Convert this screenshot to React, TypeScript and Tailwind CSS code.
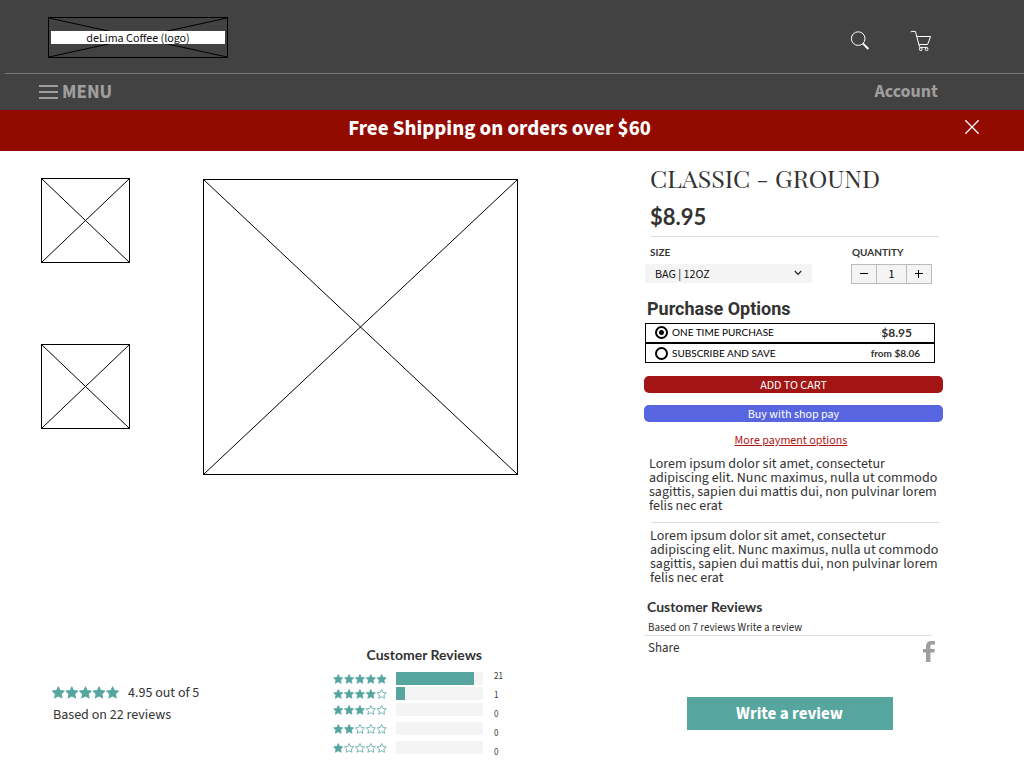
import { useState } from "react";

const SOURCE = "font-['Source_Sans_Pro','Source_Sans_3','Noto_Sans_CJK_SC',sans-serif]";
const LATO = "font-['Lato',sans-serif]";

const STAR = "M10 1 L12.8 7 L19.2 7.7 L14.5 12.1 L15.8 18.6 L10 15.4 L4.2 18.6 L5.5 12.1 L0.8 7.7 L7.2 7 Z";

function Stars({ filled, className }: { filled: number; className: string }) {
  return (
    <svg
      viewBox="0 0 107 20"
      className={`text-[#56a69f] ${className}`}
      role="img"
      aria-label={`${filled} out of 5 stars`}
    >
      {[0, 1, 2, 3, 4].map((i) => (
        <path
          key={i}
          d={STAR}
          transform={`translate(${i * 21.7} 0)`}
          fill={i < filled ? "currentColor" : "none"}
          stroke="currentColor"
          strokeWidth="1.6"
          strokeLinejoin="round"
        />
      ))}
    </svg>
  );
}

function Placeholder({ className }: { className: string }) {
  return (
    <svg className={`block border border-black ${className}`} viewBox="0 0 100 100" preserveAspectRatio="none" aria-hidden="true">
      <path d="M0 0L100 100M100 0L0 100" stroke="#000" strokeWidth="1" vectorEffect="non-scaling-stroke" />
    </svg>
  );
}

const ratings = [
  { stars: 5, count: 21, share: 90 },
  { stars: 4, count: 1, share: 10 },
  { stars: 3, count: 0, share: 0 },
  { stars: 2, count: 0, share: 0 },
  { stars: 1, count: 0, share: 0 },
];

const ROWS = "grid grid-rows-[15px_15px_17px_21px_17px] items-center";

function Header() {
  return (
    <header className="bg-[#424242]">
      <div className="flex h-[73px] items-start justify-between pt-[17px] pr-[92px] pl-12">
        <a href="#home" className="relative flex h-[41px] w-[180px] items-center justify-center px-[3px]">
          <Placeholder className="absolute inset-0 h-full w-full" />
          <span className="relative flex h-[13px] w-full justify-center bg-white text-[12px] leading-[15px] text-[#111]">
            deLima Coffee (logo)
          </span>
        </a>
        <div className="flex gap-[38px] pt-[13px]">
          <button type="button" aria-label="Search">
            <svg viewBox="0 0 22 22" className="size-[22px]" fill="none" stroke="#fff">
              <circle cx="8.2" cy="8.6" r="6.8" strokeWidth="1" />
              <path d="M13 13.6L18.4 19" strokeWidth="2" />
            </svg>
          </button>
          <button type="button" aria-label="Cart">
            <svg viewBox="0 0 22 22" className="size-[22px]" fill="none" stroke="#fff" strokeWidth="1">
              <path d="M1.2 2.2V1.4H5.4L9.6 17.4H17.6" />
              <path d="M7 6.5H20.6L17.6 14.5H9" />
              <circle cx="10.8" cy="19.2" r="1.4" />
              <circle cx="16.6" cy="19.2" r="1.4" />
            </svg>
          </button>
        </div>
      </div>
      <nav className="ml-[5px] flex h-[37px] items-center justify-between border-t border-[#777] pr-[86px] pb-px pl-[34px] font-bold text-[#9e9e9e]">
        <button type="button" className="flex items-center gap-1 text-[19px]">
          <svg viewBox="0 0 19 14" className="h-[14px] w-[19px]" fill="currentColor" aria-hidden="true">
            <path d="M0 0H19V2H0ZM0 6H19V8H0ZM0 12H19V14H0Z" />
          </svg>
          <span className="pt-[2px] leading-[22px]">MENU</span>
        </button>
        <a href="#account" className="text-[18px] leading-6">
          Account
        </a>
      </nav>
    </header>
  );
}

function Banner({ onClose }: { onClose: () => void }) {
  return (
    <div className="flex h-[41px] items-start bg-[#930a00] pt-[6px] pr-11 pl-[19px] text-white">
      <p className="flex-1 pl-[16px] text-center text-[21px] leading-6 font-bold">Free Shipping on orders over $60</p>
      <button type="button" aria-label="Dismiss" onClick={onClose} className="pt-[3px]">
        <svg viewBox="0 0 16 16" className="size-4" stroke="currentColor" strokeWidth="1.3">
          <path d="M1.3 1.3L14.7 14.7M14.7 1.3L1.3 14.7" />
        </svg>
      </button>
    </div>
  );
}

function Reviews() {
  return (
    <section className="mt-[170px] flex pl-[11px]">
      <div className="w-[281px] pt-[36px] text-[14px] leading-5 text-[#333]">
        <div className="flex items-center gap-[9px]">
          <Stars filled={5} className="h-[13px] w-[67px]" />
          <span className="pt-[2px]">4.95 out of 5</span>
        </div>
        <p className="pt-[2px] pl-px">Based on 22 reviews</p>
      </div>
      <div>
        <h2 className={`pr-[21px] text-right text-[14px] leading-5 font-bold text-[#333] ${LATO}`}>Customer Reviews</h2>
        <div className="flex items-start pt-[6px]">
          <div className={ROWS}>
            {ratings.map((r) => (
              <Stars key={r.stars} filled={r.stars} className="h-[10px] w-[54px]" />
            ))}
          </div>
          <div className={`ml-[9px] ${ROWS}`}>
            {ratings.map((r) => (
              <div key={r.stars} className="h-[13px] w-[87px] bg-[#f4f4f4]">
                <div className="h-full bg-[#56a69f]" style={{ width: `${r.share}%` }} />
              </div>
            ))}
          </div>
          <div className="-mt-1 ml-[11px] text-[9px] leading-[19px] text-[#333]">
            {ratings.map((r) => (
              <div key={r.stars}>{r.count}</div>
            ))}
          </div>
        </div>
      </div>
    </section>
  );
}

const RADIO =
  "size-[13px] shrink-0 appearance-none rounded-full border-2 border-black bg-white checked:bg-[radial-gradient(circle,#000_2px,#fff_3px)]";
const LOREM =
  "Lorem ipsum dolor sit amet, consectetur adipiscing elit. Nunc maximus, nulla ut commodo sagittis, sapien dui mattis dui, non pulvinar lorem felis nec erat";

function Product() {
  const [qty, setQty] = useState(1);
  return (
    <section className="w-[299px] shrink-0 text-[#333]">
      <div className="px-[6px]">
        <h1 className="pt-[11px] font-['Playfair_Display','Liberation_Serif',serif] text-[25px] leading-8">CLASSIC - GROUND</h1>
        <p className={`pt-[9px] text-[22px] leading-7 font-bold ${LATO}`}>$8.95</p>
      </div>
      <hr className="mt-[5px] mr-1 ml-[7px] border-[#ddd]" />
      <div className={`mt-[8px] flex justify-between pr-[11px] pl-px ${LATO}`}>
        <div>
          <label htmlFor="size" className="block pl-[5px] text-[10px] leading-[14px] font-bold">
            SIZE
          </label>
          <div className="relative mt-[5px]">
            <select
              id="size"
              className={`block h-[19px] w-[167px] appearance-none bg-[#f4f4f4] pt-[2px] pl-[10px] text-[12px] leading-[17px] text-[#111] ${SOURCE}`}
            >
              <option>BAG | 12OZ</option>
            </select>
            <svg viewBox="0 0 8 6" className="pointer-events-none absolute top-[6px] right-[10px] h-[6px] w-2" fill="none" stroke="#222" strokeWidth="1.2">
              <path d="M0.8 1L4 4.4L7.2 1" />
            </svg>
          </div>
        </div>
        <div>
          <label htmlFor="qty" className="block pl-px text-[10px] leading-[14px] font-bold">
            QUANTITY
          </label>
          <div className="mt-[5px] flex h-5 w-[81px] divide-x divide-[#bbb] border border-[#bbb] bg-[#f4f4f4] text-black">
            <button type="button" aria-label="Decrease" className="flex flex-1 items-center justify-center" onClick={() => setQty(Math.max(1, qty - 1))}>
              <svg viewBox="0 0 8 8" className="size-2" stroke="currentColor"><path d="M0 3.5H8" /></svg>
            </button>
            <input
              id="qty"
              className={`w-[30px] pt-[2px] text-center text-[12px] ${SOURCE}`}
              value={qty}
              onChange={(e) => setQty(Number(e.target.value) || 1)}
            />
            <button type="button" aria-label="Increase" className="flex flex-1 items-center justify-center" onClick={() => setQty(qty + 1)}>
              <svg viewBox="0 0 8 8" className="size-2" stroke="currentColor"><path d="M0 3.5H8M3.5 0V8" /></svg>
            </button>
          </div>
        </div>
      </div>
      <fieldset className="pr-2 pl-px">
        <legend className="pt-[14px] pl-[2px] font-['Roboto',sans-serif] text-[18px] leading-[22px] font-bold">Purchase Options</legend>
        <div className={`mt-[3px] text-[10px] text-black ${LATO}`}>
          <label className="flex h-5 items-center gap-1 border border-black pr-[22px] pb-px pl-[9px]">
            <input type="radio" name="plan" defaultChecked className={RADIO} />
            ONE TIME PURCHASE
            <span className="ml-auto text-[12px] leading-4 font-bold text-[#333]">$8.95</span>
          </label>
          <label className="flex h-5 items-center gap-1 border border-black pr-[14px] pl-[9px]">
            <input type="radio" name="plan" className={RADIO} />
            SUBSCRIBE AND SAVE
            <span className="ml-auto font-bold text-[#333]">from $8.06</span>
          </label>
        </div>
      </fieldset>
      <div className="mt-[13px] flex flex-col gap-3 text-center text-[12px] leading-[15px] text-white">
        <button type="button" className="h-[17px] rounded-[5px] bg-[#a31515] pt-[2px]">ADD TO CART</button>
        <button type="button" className="h-[17px] rounded-[5px] bg-[#5865e0] pt-[2px]">Buy with shop pay</button>
      </div>
      <p className="pt-[10px] pr-[5px] text-center text-[12px] leading-[18px] text-[#b01515]">
        <a href="#payment" className="underline">More payment options</a>
      </p>
      <p className="pt-[7px] pl-[5px] text-[14px] leading-[14px]">{LOREM}</p>
      <hr className="mt-[9px] mr-[3px] ml-[7px] border-[#ddd]" />
      <p className="pt-[6px] pl-[6px] text-[14px] leading-[14px]">{LOREM}</p>
      <h2 className={`pt-[12px] pl-[3px] text-[14px] leading-5 font-bold ${LATO}`}>Customer Reviews</h2>
      <p className="pt-1 pl-1 text-[11px] leading-[14px]">Based on 7 reviews Write a review</p>
      <hr className="mr-[11px] border-[#ddd]" />
      <div className="flex justify-between pr-2 pl-1 text-[13px] leading-6">
        <span>Share</span>
        <a href="#facebook" aria-label="Share on Facebook" className="pt-[5px]">
          <svg viewBox="0 0 12 21" className="h-[21px] w-3" fill="#9e9e9e">
            <path d="M3 21V11.4H0V7.9H3V5.2C3 1.8 5 0 8.2 0H12V3.6H9.4C8 3.6 7.4 4.2 7.4 5.4V7.9H11.9L11.4 11.4H7.4V21Z" />
          </svg>
        </a>
      </div>
      <div className="flex justify-center pt-[35px] pr-2">
        <button type="button" className="h-[33px] w-[206px] bg-[#56a69f] pt-[2px] text-[17px] leading-[31px] font-bold text-white">
          Write a review
        </button>
      </div>
    </section>
  );
}

export default function App() {
  const [banner, setBanner] = useState(true);
  return (
    <div className={`bg-white ${SOURCE}`}>
      <Header />
      {banner && <Banner onClose={() => setBanner(false)} />}
      <main className="flex justify-between pr-[81px] pl-[41px]">
        <div>
          <div className="flex gap-[73px] pt-[27px]">
            <div className="flex flex-col gap-[81px]">
              <Placeholder className="h-[85px] w-[89px]" />
              <Placeholder className="h-[85px] w-[89px]" />
            </div>
            <Placeholder className="mt-px h-[296px] w-[315px]" />
          </div>
          <Reviews />
        </div>
        <Product />
      </main>
    </div>
  );
}
